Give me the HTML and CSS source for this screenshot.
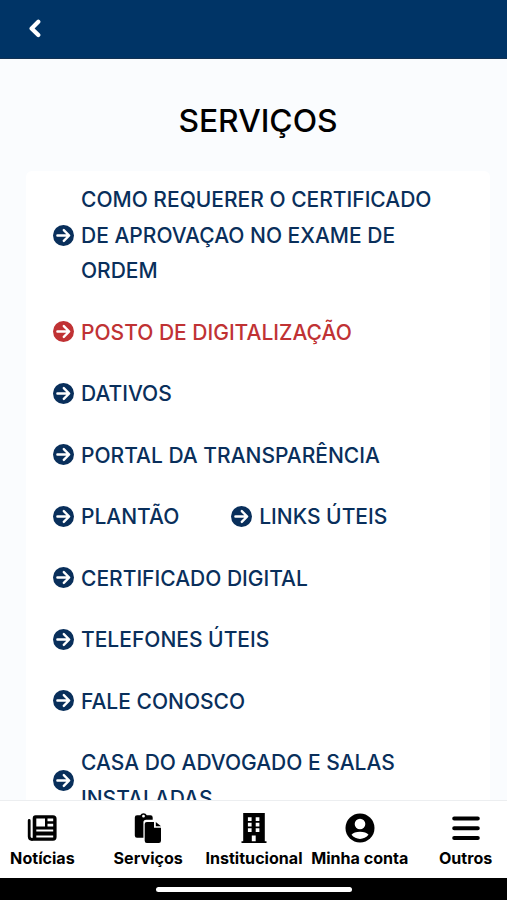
FILE: index.html
```html
<!DOCTYPE html>
<html lang="pt-BR">
<head>
  <meta charset="UTF-8" />
  <meta name="viewport" content="width=device-width, initial-scale=1.0"/>
  <title>Serviços</title>
  <link rel="stylesheet" href="styles.css">
</head>
<body>
  <svg class="sprite" aria-hidden="true">
    <symbol id="arrow" viewBox="0 0 20 20">
      <circle cx="10" cy="10" r="10" fill="currentColor"/>
      <path d="M4.2 10H15M10.3 4.9L15.4 10L10.3 15.1" fill="none" stroke="#fff" stroke-width="2.3" stroke-linecap="round" stroke-linejoin="round"/>
    </symbol>
  </svg>

  <header class="topbar">
    <a href="#" class="back" aria-label="Voltar">
      <svg width="14" height="20" viewBox="0 0 14 20"><path d="M10.3 3.7L3.6 10.4L10.3 17.1" fill="none" stroke="#fff" stroke-width="4.2" stroke-linecap="round" stroke-linejoin="round"/></svg>
    </a>
  </header>

  <main class="content">
    <h1>SERVIÇOS</h1>
    <ul class="services">
      <li><a href="#"><svg class="arrow"><use href="#arrow"/></svg><span>COMO REQUERER O CERTIFICADO<br>DE APROVAÇAO NO EXAME DE<br>ORDEM</span></a></li>
      <li><a href="#" class="active"><svg class="arrow"><use href="#arrow"/></svg><span>POSTO DE DIGITALIZAÇÃO</span></a></li>
      <li><a href="#"><svg class="arrow"><use href="#arrow"/></svg><span>DATIVOS</span></a></li>
      <li><a href="#"><svg class="arrow"><use href="#arrow"/></svg><span>PORTAL DA TRANSPARÊNCIA</span></a></li>
      <li class="pair">
        <a href="#"><svg class="arrow"><use href="#arrow"/></svg><span>PLANTÃO</span></a>
        <a href="#"><svg class="arrow"><use href="#arrow"/></svg><span>LINKS ÚTEIS</span></a>
      </li>
      <li><a href="#"><svg class="arrow"><use href="#arrow"/></svg><span>CERTIFICADO DIGITAL</span></a></li>
      <li><a href="#"><svg class="arrow"><use href="#arrow"/></svg><span>TELEFONES ÚTEIS</span></a></li>
      <li><a href="#"><svg class="arrow"><use href="#arrow"/></svg><span>FALE CONOSCO</span></a></li>
      <li><a href="#"><svg class="arrow"><use href="#arrow"/></svg><span>CASA DO ADVOGADO E SALAS<br>INSTALADAS</span></a></li>
    </ul>
  </main>

  <nav class="tabs">
    <a href="#">
      <svg width="30" height="30" viewBox="0 0 30 30">
        <path d="M2.2 7.5V23.5Q2.2 26.3 5 26.3" fill="none" stroke="#000" stroke-width="2.8" stroke-linecap="round"/>
        <path fill-rule="evenodd" d="M8.6 2.2H26Q29.6 2.2 29.6 5.8V24Q29.6 27.7 26 27.7H4Q5.7 26.6 5.7 24V5.4Q5.7 2.2 8.6 2.2ZM9.3 5.6V13.4H18V5.6ZM20.5 5.6V8.2H26.2V5.6ZM20.5 10.8V13.4H26.2V10.8ZM9.3 16.5V18.5H26.2V16.5ZM9.3 22.4V24.4H26.2V22.4Z"/>
      </svg>
      <span>Notícias</span>
    </a>
    <a href="#">
      <svg width="30" height="30" viewBox="0 0 30 30">
        <path fill-rule="evenodd" d="M4 2.2H7.3A3.6 3.6 0 0 1 13.8 2.2H17.5Q19.7 2.2 19.7 4.4V6.8H13.2Q10.4 6.8 10.4 9.6V24.8H4Q1.8 24.8 1.8 22.6V4.4Q1.8 2.2 4 2.2ZM10.5 1.8A1.4 1.4 0 1 0 10.5 4.6A1.4 1.4 0 1 0 10.5 1.8Z"/>
        <path d="M13.8 9H21V14.7H28V27.8Q28 30 25.8 30H13.8Q11.7 30 11.7 27.8V11.1Q11.7 9 13.8 9Z"/>
        <path d="M22.8 9L28 13.2H22.8Z"/>
      </svg>
      <span>Serviços</span>
    </a>
    <a href="#">
      <svg width="30" height="30" viewBox="0 0 30 30">
        <path fill-rule="evenodd" d="M4.2 0H25.8V28.2H27.5V30H2.5V28.2H4.2ZM8.9 4.2V7.9H12.6V4.2ZM16.7 4.2V7.9H20.4V4.2ZM8.9 9.7V13.4H12.6V9.7ZM16.7 9.7V13.4H20.4V9.7ZM8.9 15.2V18.9H12.6V15.2ZM16.7 15.2V18.9H20.4V15.2ZM12.8 22.5V28.2H16.7V22.5Z"/>
      </svg>
      <span>Institucional</span>
    </a>
    <a href="#">
      <svg width="30" height="30" viewBox="0 0 30 30">
        <circle cx="15" cy="15" r="14.5"/>
        <circle cx="15" cy="11" r="5.3" fill="#fff"/>
        <path d="M6.5 21.8C9 17.8 21 17.8 23.5 21.8C19.5 27.3 10.5 27.3 6.5 21.8Z" fill="#fff"/>
      </svg>
      <span>Minha conta</span>
    </a>
    <a href="#">
      <svg width="30" height="30" viewBox="0 0 30 30"><path d="M3.2 5.6H26.8M3.2 15.3H26.8M3.2 25.1H26.8" stroke="#000" stroke-width="4" stroke-linecap="round"/></svg>
      <span>Outros</span>
    </a>
  </nav>
  <div class="home-bar"><span></span></div>
</body>
</html>
```
FILE: styles.css
```css
* {
  box-sizing: border-box;
}
body {
  margin: 0;
  height: 900px;
  overflow: hidden;
  display: flex;
  flex-direction: column;
  font-family: Inter, "Liberation Sans", sans-serif;
  background-color: #fafcfe;
  color: #000;
}
a {
  color: inherit;
  text-decoration: none;
}
.sprite {
  position: absolute;
  width: 0;
  height: 0;
}
.topbar {
  flex: none;
  height: 59px;
  padding: 18px 28px;
  background-color: #003466;
  border-bottom: 1px solid #123152;
}
.back svg {
  display: block;
}
.content {
  flex: 1;
  min-height: 0;
  overflow: hidden;
  padding: 41px 17px 0 26px;
}
h1 {
  margin: 0 0 30px;
  font-size: 31.8px;
  line-height: 41px;
  font-weight: 500;
  text-align: center;
}
.services {
  list-style: none;
  margin: 0;
  padding: 11.4px 27px;
  display: flex;
  flex-direction: column;
  gap: 26.1px;
  background-color: #fff;
  border-radius: 6px;
  color: #092f5b;
  font-size: 21px;
  line-height: 35.4px;
  font-weight: 500;
  white-space: nowrap;
}
.services a {
  display: flex;
  align-items: center;
  gap: 7px;
}
.services .active {
  color: #c03234;
}
.pair {
  display: flex;
  gap: 52px;
}
.arrow {
  flex: none;
  width: 21px;
  height: 21px;
  margin-bottom: 1px;
}
.tabs {
  flex: none;
  height: 78px;
  display: grid;
  grid-template-columns: repeat(5, 105.8px);
  justify-content: center;
  padding-left: 1px;
  background-color: #fff;
  border-top: 1px solid #eceef0;
}
.tabs a {
  display: flex;
  flex-direction: column;
  align-items: center;
  padding-top: 12px;
  gap: 4px;
  font-size: 16.1px;
  line-height: 22px;
  font-weight: 700;
  white-space: nowrap;
}
.home-bar {
  flex: none;
  height: 22px;
  display: flex;
  justify-content: center;
  align-items: center;
  background-color: #000;
}
.home-bar span {
  width: 196px;
  height: 5px;
  border-radius: 3px;
  background-color: #fff;
}
```
